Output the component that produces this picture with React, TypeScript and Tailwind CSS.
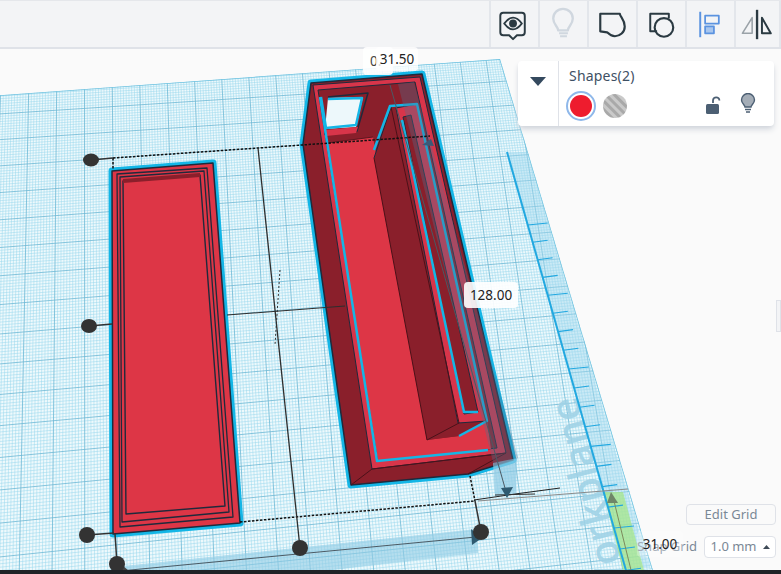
import React from 'react';

// perspective of the workplane: dimension box corners map to the unit square
const quad = [[113, 158], [430, 136], [475, 501], [117, 538]];
const [[x0, y0], [x1, y1], [x2, y2], [x3, y3]] = quad;
const dx1 = x1 - x2, dx2 = x3 - x2, dx3 = x0 - x1 + x2 - x3;
const dy1 = y1 - y2, dy2 = y3 - y2, dy3 = y0 - y1 + y2 - y3;
const den = dx1 * dy2 - dx2 * dy1;
const g = (dx3 * dy2 - dx2 * dy3) / den;
const h = (dx1 * dy3 - dx3 * dy1) / den;
const a = x1 - x0 + g * x1, b = x3 - x0 + h * x3;
const d = y1 - y0 + g * y1, e = y3 - y0 + h * y3;

const project = (uMm: number, vMm: number) => {
    const u = uMm / 115, v = vMm / 128;
    const w = g * u + h * v + 1;
    return [(a * u + b * v + x0) / w, (d * u + e * v + y0) / w];
};

const range = (from: number, to: number, step = 1) => {
    const out: number[] = [];
    for (let i = from; i <= to; i += step) out.push(i);
    return out;
};

const GridLine: React.FC<{ p: number[]; q: number[]; color: string; width: number }> = ({ p, q, color, width }) => (
    <line x1={p[0]} y1={p[1]} x2={q[0]} y2={q[1]} stroke={color} strokeWidth={width} />
);

const Grid = () => {
    const us = range(-60, 200);
    const vs = range(-30, 175);
    return (
        <g clipPath="url(#plane)">
            <rect x="-10" y="48" width="800" height="530" fill="#eef9fc" />
            {us.filter(i => i % 10 !== 0).map(i => (
                <GridLine key={'u' + i} p={project(i, -30)} q={project(i, 175)} color="#97d6ec" width={0.5} />
            ))}
            {vs.filter(i => i % 10 !== 0).map(i => (
                <GridLine key={'v' + i} p={project(-60, i)} q={project(200, i)} color="#97d6ec" width={0.5} />
            ))}
            {us.filter(i => i % 10 === 0).map(i => (
                <GridLine key={'U' + i} p={project(i, -30)} q={project(i, 175)} color="#6cb8d4" width={0.8} />
            ))}
            {vs.filter(i => i % 10 === 0).map(i => (
                <GridLine key={'V' + i} p={project(-60, i)} q={project(200, i)} color="#6cb8d4" width={0.8} />
            ))}
            {/* ruler strip along the right side */}
            <polygon points="507,152 527,152 650,568 626,568" fill="#9fd8ee" fillOpacity="0.45" />
            <text
                transform="translate(631,598) rotate(-105)"
                fontFamily="'Open Sans', sans-serif"
                fontSize="40"
                fontWeight="600"
                fill="#9fd2e6"
                fillOpacity="0.9"
            >
                Workplane
            </text>
            <polygon points="603,492 623,492 645,574 624,574" fill="#a6e58a" fillOpacity="0.75" />
            <line x1="507" y1="152" x2="627" y2="574" stroke="#22a8e0" strokeWidth="2" />
            {range(0, 24).map(i => {
                const v = 25 + i * 6.25;
                const y = project(0, v)[1];
                const x = 507 + (y - 152) * (120 / 422);
                const len = i % 4 === 0 ? 20 : 15;
                return y > 152 ? <line key={i} x1={x} y1={y} x2={x + len} y2={y - 2} stroke="#22a8e0" strokeWidth="1.1" /> : null;
            })}
            <polyline points="-10,96 500,59 654,574" fill="none" stroke="#72c3e0" strokeWidth="1.5" />
        </g>
    );
};

const Lid = () => (
    <g strokeLinejoin="round">
        <polygon points="112,171 213,163 240,523 113,534" fill="#dd3646" stroke="#14b6e6" strokeWidth="7" />
        <polygon points="112,171 213,163 240,523 113,534" fill="#dd3646" stroke="#1f2a3c" strokeWidth="1.5" />
        <polygon points="117,174 207,168 233,517 120,527" fill="none" stroke="#1f2a3c" strokeWidth="1.3" />
        <polygon points="120,177 204,171 229,512 122,522" fill="none" stroke="#1f2a3c" strokeWidth="1.3" />
        <polygon points="123,181 200,175 225,506 126,514" fill="#dd3646" stroke="#1f2a3c" strokeWidth="1.4" />
        <polygon points="123,179 200,173 200,177 123,183" fill="#8a1f2b" />
    </g>
);

const Box = () => (
    <g strokeLinejoin="round">
        <polygon points="303,144 311,83 422,74 513,460 468,474 351,485" fill="#8a1f2b" stroke="#14b6e6" strokeWidth="7" />
        <polygon points="303,144 311,83 422,74 513,460 468,474 351,485" fill="#8a1f2b" stroke="#1f2a3c" strokeWidth="1.5" />
        {/* rim */}
        <polygon points="313,85 420,77 506,453 372,469" fill="#d8354a" stroke="#1f2a3c" strokeWidth="1" />
        <polygon points="318,90 415,82 497,448 378,461" fill="#8a1f2b" stroke="#1f2a3c" strokeWidth="1" />
        {/* floor */}
        <polygon points="327,143 373,137 427,440 459,436 487,421 491,449 378,461" fill="#dd3646" />
        <polyline points="327,143 373,137" fill="none" stroke="#5c1620" strokeWidth="1" />
        {/* window in the back wall */}
        <polygon points="328,98 363,97 356,127 325,129" fill="#edf8fb" />
        <polyline points="328,97 368,93 357,131 324,134" fill="none" stroke="#1f2a3c" strokeWidth="1.500" />
        <polyline points="321,97 326,128 356,125 362,98 328,99" fill="none" stroke="#14b6e6" strokeWidth="2.500" />
        <polygon points="325,130 358,127 356,133 326,136" fill="#d8354a" />
        {/* partition */}
        <polygon points="374,158 391,107 417,104 487,421 459,436 427,440" fill="#8a1f2b" />
        <polygon points="396,108 417,104 487,421 458,423" fill="#d8354a" stroke="#1f2a3c" strokeWidth="1" />
        <polygon points="403,117 411,115 478,412 464,414" fill="#8a1f2b" stroke="#1f2a3c" strokeWidth="1" />
        <polyline points="391,107 459,423 427,440 374,158" fill="none" stroke="#4b1119" strokeWidth="1" />
        <polyline points="391,107 374,158" fill="none" stroke="#1f2a3c" strokeWidth="1" />
        {/* selection outlines */}
        <polyline points="320,97 377,461 488,450" fill="none" stroke="#14b6e6" strokeWidth="2.500" />
        <polyline points="374,150 390,106 417,104 487,421 459,436" fill="none" stroke="#14b6e6" strokeWidth="2.500" />
        <polyline points="402,120 464,412 478,412" fill="none" stroke="#14b6e6" strokeWidth="2.500" />
        <polyline points="351,485 372,469 506,453" fill="none" stroke="#4b1119" strokeWidth="1" />
        <polyline points="468,474 506,453" fill="none" stroke="#4b1119" strokeWidth="1" />
    </g>
);

const Dimensions = () => (
    <g>
        {/* light arrow bands */}
        <polygon points="123,566 477,529 478,553 330,570 123,578" fill="#8fcbe4" fillOpacity="0.6" />
        <polygon points="493,463 517,458 516,493 495,496" fill="#8fcbe4" fillOpacity="0.7" />
        <polygon points="398,84 414,82 518,458 494,466" fill="#54708c" fillOpacity="0.36" />
        {/* bounding box */}
        <polyline points="113,158 302,145 430,136" fill="none" stroke="#111" strokeWidth="1.500" strokeDasharray="2.500 1.500" />
        <polyline points="240,522 475,501" fill="none" stroke="#111" strokeWidth="1.500" strokeDasharray="2.500 1.500" />
        <line x1="470" y1="476" x2="475" y2="501" stroke="#111" strokeWidth="1.500" strokeDasharray="2.500 1.500" />
        <line x1="113" y1="158" x2="113" y2="170" stroke="#111" strokeWidth="1.500" strokeDasharray="2.500 1.500" />
        <line x1="91" y1="160" x2="113" y2="158" stroke="#333" strokeWidth="1.500" />
        <line x1="89" y1="326" x2="112" y2="324" stroke="#333" strokeWidth="1.500" />
        <line x1="87" y1="535" x2="114" y2="533" stroke="#333" strokeWidth="1.500" />
        <line x1="115" y1="534" x2="117" y2="564" stroke="#333" strokeWidth="1.500" />
        <line x1="475" y1="501" x2="481" y2="532" stroke="#333" strokeWidth="1.500" />
        {/* centre cross */}
        <line x1="258" y1="148" x2="300" y2="548" stroke="#2e2e2e" strokeWidth="1.300" />
        <line x1="227" y1="315" x2="345" y2="306" stroke="#2e2e2e" strokeWidth="1.100" />
        <line x1="280" y1="270" x2="275" y2="345" stroke="#2e2e2e" strokeWidth="1" strokeDasharray="2 2" />
        {/* measure lines */}
        <line x1="120" y1="571" x2="476" y2="537" stroke="#4b5a64" strokeWidth="1" />
        <polygon points="471,529 482,538 472,545" fill="#2f5a70" />
        <polygon points="122,565 129,571 122,574" fill="#444" />
        <line x1="478" y1="501" x2="628" y2="489" stroke="#8a8a8a" strokeWidth="1" />
        <polyline points="474,500 515,494 560,488" fill="none" stroke="#222" strokeWidth="1" />
        <line x1="495" y1="495" x2="535" y2="494" stroke="#333" strokeWidth="1" />
        <line x1="390" y1="85" x2="507" y2="495" stroke="#4b5a64" strokeWidth="1" />
        <polygon points="501,488 513,487 507,498" fill="#2f5a70" />
        <polygon points="422,145 431,139 434,146" fill="#3a5a78" />
        <line x1="613" y1="497" x2="631" y2="570" stroke="#7c8a5c" strokeWidth="1" />
        <polygon points="607,503 618,503 611,492" fill="#6f8668" />
        {/* handles */}
        <ellipse cx="91" cy="160" rx="8" ry="6.500" fill="#333" />
        <ellipse cx="89" cy="326" rx="8" ry="7" fill="#333" />
        <circle cx="87" cy="535" r="8" fill="#333" />
        <circle cx="117" cy="564" r="8" fill="#333" />
        <circle cx="300" cy="548" r="8" fill="#333" />
        <circle cx="481" cy="532" r="8" fill="#333" />
    </g>
);

const IconButton: React.FC<{ children: React.ReactNode; wide?: boolean }> = ({ children, wide = true }) => (
    <div className={wide ? 'w-[49px] h-full border-l-2 border-[#e3e6eb]' : 'w-[47px] h-full border-x-2 border-[#e3e6eb]'}>
        <svg viewBox="0 0 47 47" className="w-[47px] h-full" fill="none" strokeLinejoin="round">
            {children}
        </svg>
    </div>
);

const Toolbar = () => (
    <div className="h-[49px] shrink-0 flex justify-end bg-[#f3f4f6] border-t border-b-2 border-t-[#e5e7eb] border-b-[#dfe2e8]">
        <IconButton>
            <path d="M12 12h19a3 3 0 0 1 3 3v17a3 3 0 0 1-3 3h-5l-4 4-4-4h-6a3 3 0 0 1-3-3V15a3 3 0 0 1 3-3z" stroke="#2b3a42" strokeWidth="2" />
            <path d="M13 23c3-4 6-6 9-6s6 2 9 6c-3 4-6 6-9 6s-6-2-9-6z" stroke="#2b3a42" strokeWidth="2" />
            <circle cx="22" cy="23" r="4" fill="#2b3a42" />
        </IconButton>
        <IconButton>
            <path d="M18 30c0-4-5-6-5-12a10 10 0 0 1 20 0c0 6-5 8-5 12z" stroke="#d0d7df" strokeWidth="2.400" />
            <path d="M19 33h9M20 36h7" stroke="#d0d7df" strokeWidth="2" />
        </IconButton>
        <IconButton>
            <path d="M11 13h20c0 3 5 6 5 13 0 6-5 10-10 10-4 0-6-2-8-4l-7-1z" stroke="#2b3a42" strokeWidth="2.200" />
        </IconButton>
        <IconButton>
            <path d="M19 31h-7V13h19v5" stroke="#2b3a42" strokeWidth="2" />
            <circle cx="26" cy="27" r="9.500" stroke="#2b3a42" strokeWidth="2.200" />
        </IconButton>
        <IconButton>
            <path d="M13 11v26" stroke="#5b93e0" strokeWidth="2" />
            <rect x="18" y="15" width="14" height="8" stroke="#5b93e0" strokeWidth="1.800" />
            <rect x="18" y="26" width="9" height="7" fill="#a8c6ee" stroke="#5b93e0" strokeWidth="1.800" />
        </IconButton>
        <IconButton wide={false}>
            <path d="M21 9v30" stroke="#2b3a42" strokeWidth="2.400" />
            <path d="M6 33l10-16v16z" stroke="#9aa2a8" strokeWidth="1.600" />
            <path d="M26 17l9 16h-9z" stroke="#2b3a42" strokeWidth="2" />
        </IconButton>
    </div>
);

const ShapesPanel = () => (
    <div className="absolute left-[518px] top-[12px] w-[256px] h-[65px] flex bg-white rounded shadow-md shadow-gray-300">
        <div className="w-[41px] flex justify-center pt-[16px] border-r border-[#dfe2e8]">
            <svg width="16" height="9" viewBox="0 0 16 9">
                <path d="M0 0h16L8 9z" fill="#34495e" />
            </svg>
        </div>
        <div className="flex-1 pl-[10px] pt-[5px] pr-[18px]">
            <div className="text-[14px] leading-5 tracking-[0.2px] text-[#3e5064]">Shapes(2)</div>
            <div className="flex items-center mt-[5px] -ml-[3px]">
                <div className="w-[30px] h-[30px] rounded-full border-2 border-[#8fb8ea] p-[2px]">
                    <div className="w-full h-full rounded-full bg-[#ee1c2e]" />
                </div>
                <svg width="24" height="24" viewBox="0 0 24 24" className="ml-[7px]">
                    <defs>
                        <pattern id="stripes" width="6" height="6" patternUnits="userSpaceOnUse" patternTransform="rotate(-45)">
                            <rect width="6" height="6" fill="#c9c9c9" />
                            <rect width="3" height="6" fill="#a9a9a9" />
                        </pattern>
                    </defs>
                    <circle cx="12" cy="12" r="12" fill="url(#stripes)" />
                </svg>
                <svg width="16" height="20" viewBox="0 0 16 20" className="ml-auto mr-[19px] -mt-[3px]">
                    <path d="M8 8V5.500a3.200 3.200 0 0 1 6.400 0" fill="none" stroke="#4c5f73" strokeWidth="1.800" />
                    <rect x="1" y="9" width="13" height="10" rx="1.500" fill="#4c5f73" />
                </svg>
                <svg width="16" height="22" viewBox="0 0 16 22" className="-mt-[4px]">
                    <path d="M5 14c0-2-3.500-3.500-3.500-7a6.500 6.500 0 0 1 13 0c0 3.500-3.500 5-3.500 7z" fill="#a4adb7" stroke="#4c5f73" strokeWidth="1.400" />
                    <path d="M5 16.500h6M6 19h4" stroke="#4c5f73" strokeWidth="1.400" />
                </svg>
            </div>
        </div>
    </div>
);

const GridControls = () => (
    <div className="absolute right-[5px] bottom-[12px] flex flex-col items-end gap-[11px] text-[13px] text-[#7a8896]">
        <div className="w-[90px] h-[21px] flex items-center justify-center bg-[#fafafa] border border-[#dfe2e8] rounded-sm">Edit Grid</div>
        <div className="flex items-center gap-[7px]">
            <span>Snap Grid</span>
            <div className="w-[72px] h-[22px] flex items-center justify-center gap-[6px] bg-white border border-[#dfe2e8] rounded-sm">
                1.0 mm
                <svg width="7" height="4" viewBox="0 0 7 4">
                    <path d="M0 4h7L3.500 0z" fill="#3e4a56" />
                </svg>
            </div>
        </div>
    </div>
);

const Label: React.FC<{ text: string; className: string }> = ({ text, className }) => (
    <div className={`absolute flex items-center justify-center rounded-sm text-[13.500px] text-[#222] ${className}`}>
        {text}
    </div>
);

export default function App() {
    return (
        <div className="w-[781px] h-[574px] flex flex-col overflow-hidden bg-[#fafafa] font-['Noto_Sans',sans-serif]">
            <Toolbar />
            <div className="relative flex-1">
                <svg viewBox="0 49 781 521" className="absolute inset-0 w-full h-full">
                    <defs>
                        <clipPath id="plane">
                            <polygon points="-10,96 500,59 654,574 -10,574" />
                        </clipPath>
                    </defs>
                    <Grid />
                    <Lid />
                    <Box />
                    <Dimensions />
                </svg>
                <div className="absolute left-[776px] top-[251px] w-[5px] h-[32px] bg-[#f3f4f6] border border-[#dfe2e8]" />
                <ShapesPanel />
                <GridControls />
                <Label text="0." className="left-[363px] top-[-2px] w-[30px] h-[28px] justify-start pl-[7px] bg-white/90 text-[#444]" />
                <Label text="31.50" className="left-[376px] top-[-2px] w-[42px] h-[24px] bg-white/80" />
                <Label text="128.00" className="left-[464px] top-[233px] w-[54px] h-[26px] bg-white/90" />
                <Label text="31.00" className="left-[637px] top-[482px] w-[46px] h-[26px] bg-white/30" />
            </div>
            <div className="h-[4px] shrink-0 bg-[#202226]" />
        </div>
    );
}
